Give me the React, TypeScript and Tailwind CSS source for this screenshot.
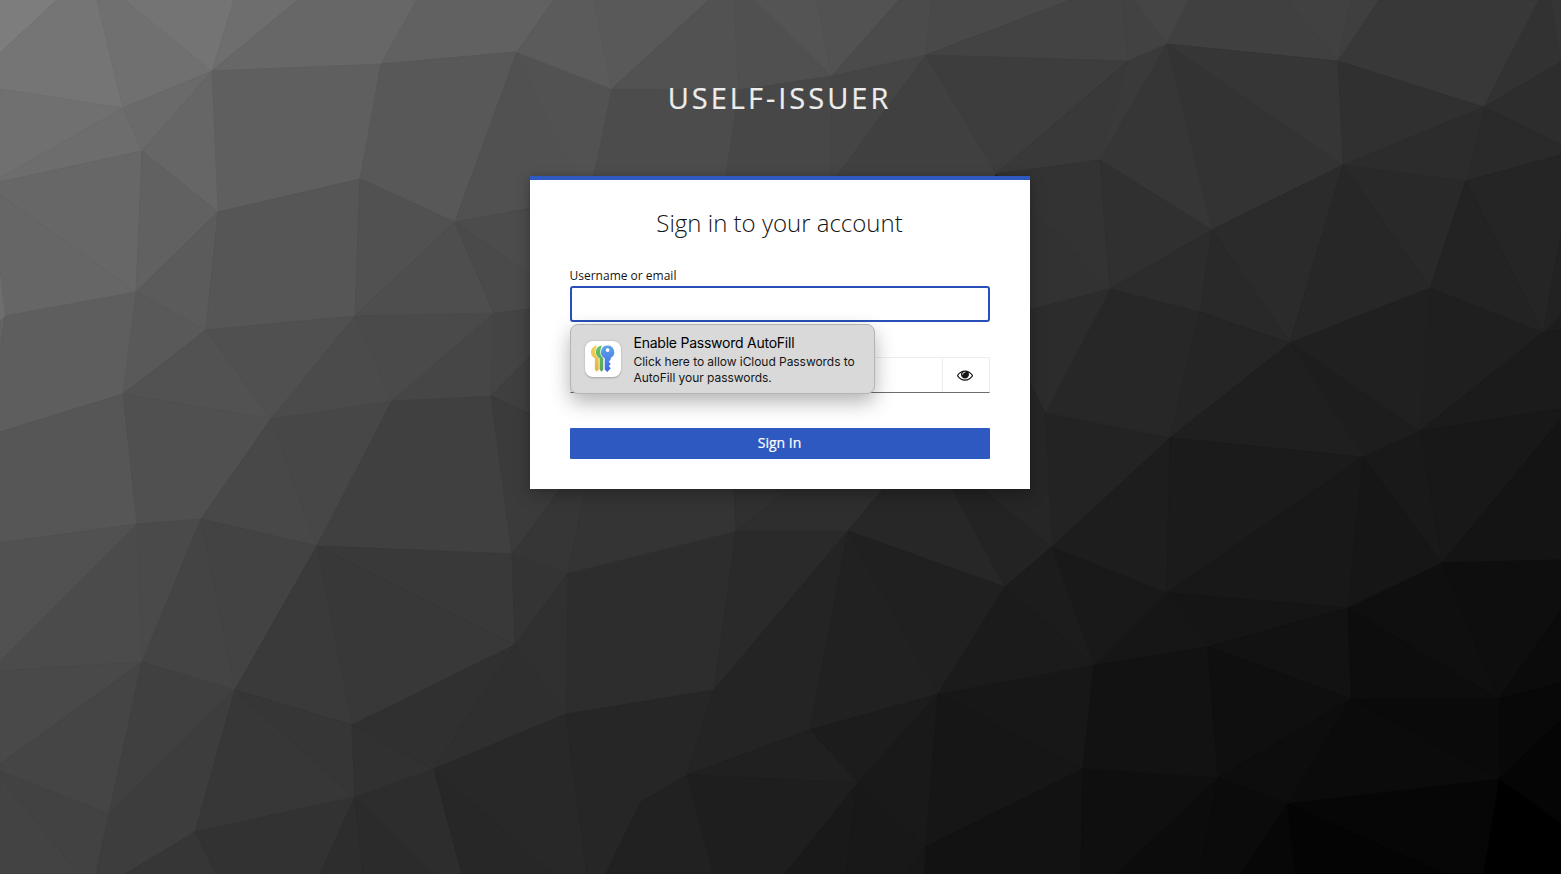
import React from "react";

/* Low-poly backdrop: "fill points" for every facet. */
const FACETS: string[] = [
  "7d7d7d 0,0 57,0 0,53",
  "757575 57,0 97,0 123,108 0,89 0,53",
  "707070 97,0 125,0 212,71 123,108",
  "747474 125,0 234,0 212,71",
  "6e6e6e 234,0 298,0 212,71",
  "676767 298,0 417,0 381,64 212,71",
  "616161 417,0 554,0 517,52 381,64",
  "707070 0,89 123,108 0,178",
  "6d6d6d 0,178 123,108 142,151 0,182",
  "6a6a6a 123,108 212,71 142,151",
  "666666 142,151 212,71 218,212",
  "5f5f5f 212,71 381,64 360,179 218,212",
  "585858 381,64 517,52 455,222 360,179",
  "515151 517,52 576,176 576,200 455,222",
  "525252 517,52 612,89 593,180 576,180",
  "676767 0,182 142,151 136,292 0,195",
  "666666 0,195 136,292 5,316 0,276",
  "6e6e6e 0,276 5,316 0,321",
  "616161 142,151 218,212 136,292",
  "5b5b5b 136,292 218,212 206,330",
  "565656 218,212 360,179 355,316 206,330",
  "515151 360,179 455,222 355,316",
  "4e4e4e 355,316 455,222 494,313",
  "4c4c4c 455,222 540,207 540,282",
  "4a4a4a 455,222 540,282 540,308 494,313",
  "636363 0,321 5,316 0,350",
  "5e5e5e 5,316 136,292 123,394 0,432 0,350",
  "595959 136,292 206,330 123,394",
  "525252 123,394 206,330 271,419",
  "505050 206,330 355,316 271,419",
  "4b4b4b 355,316 392,401 271,419",
  "4a4a4a 355,316 494,313 392,401",
  "464646 494,313 491,396 392,401",
  "444444 494,313 540,308 540,346 491,396",
  "3f3f3f 491,396 540,346 540,419",
  "565656 0,432 123,394 137,524 0,543",
  "505050 123,394 271,419 201,519 137,524",
  "484848 271,419 317,546 201,519",
  "474747 271,419 392,401 317,546",
  "404040 392,401 491,396 512,554 317,546",
  "3b3b3b 491,396 540,419 565,483 512,554",
  "515151 0,543 137,524 0,661",
  "4b4b4b 0,661 137,524 142,662 0,671",
  "4a4a4a 137,524 201,519 142,662",
  "444444 201,519 235,690 142,662",
  "434343 201,519 317,546 235,690",
  "494949 0,671 142,662 0,764",
  "454545 0,764 142,662 109,814 0,771",
  "404040 142,662 235,690 109,814",
  "3d3d3d 235,690 195,832 109,814",
  "3a3a3a 317,546 352,725 235,690",
  "393939 317,546 512,554 515,645",
  "383838 317,546 515,645 352,725",
  "343434 512,554 568,573 515,645",
  "373737 235,690 355,797 195,832",
  "363636 235,690 352,725 355,797",
  "313131 352,725 434,769 355,797",
  "303030 352,725 515,645 434,769",
  "434343 0,777 79,874 0,874",
  "424242 0,771 109,814 96,874 79,874 0,777",
  "3d3d3d 109,814 195,832 125,874 96,874",
  "363636 195,832 216,874 125,874",
  "323232 195,832 355,797 320,874 216,874",
  "2d2d2d 355,797 363,874 320,874",
  "2b2b2b 355,797 434,874 363,874",
  "2d2d2d 355,797 434,769 462,874 434,874",
  "303030 515,645 568,573 566,714",
  "2f2f2f 515,645 566,714 434,769",
  "272727 434,769 553,874 462,874",
  "282828 434,769 566,714 587,874 553,874",
  "2d2d2d 568,573 736,531 714,690 566,714",
  "2a2a2a 736,531 848,531 714,690",
  "262626 566,714 714,690 687,775 641,802 606,874 587,874",
  "363636 512,554 565,483 587,483 568,573",
  "343434 568,573 587,483 734,483 736,531",
  "303030 736,531 734,483 797,483",
  "2e2e2e 736,531 797,483 888,483 848,531",
  "272727 848,531 888,483 949,483 1005,587",
  "232323 1005,587 949,483 976,483 1052,547",
  "242424 714,690 848,531 810,730 687,775",
  "212121 848,531 938,694 810,730",
  "202020 848,531 1005,587 938,694",
  "1c1c1c 810,730 938,694 858,783",
  "202020 687,775 810,730 858,783",
  "1e1e1e 687,775 858,783 785,874 713,874",
  "212121 641,802 687,775 713,874 606,874",
  "191919 858,783 938,694 926,847",
  "191919 858,783 846,874 785,874",
  "181818 858,783 926,847 906,874 846,874",
  "171717 926,847 925,874 906,874",
  "171717 938,694 1094,665 1083,769",
  "161616 938,694 1083,769 926,847",
  "121212 926,847 1083,769 1081,874 925,874",
  "1b1b1b 1005,587 1094,665 938,694",
  "1c1c1c 1005,587 1052,547 1094,665",
  "5b5b5b 554,0 594,0 612,89 517,52",
  "595959 594,0 709,0 612,89",
  "525252 612,89 709,0 734,0 739,90",
  "505050 734,0 754,0 832,76 739,90",
  "545454 754,0 817,0 832,76",
  "525252 817,0 899,0 832,76",
  "4b4b4b 832,76 899,0 932,0 926,55",
  "494949 926,55 932,0 1071,0",
  "434343 926,55 1071,0 1123,0 1128,61",
  "4c4c4c 612,89 739,90 725,180 593,180",
  "474747 739,90 832,76 830,180 725,180",
  "454545 832,76 926,55 834,180 830,180",
  "404040 926,55 996,174 990,180 834,180",
  "3d3d3d 926,55 1128,61 996,174",
  "424242 1123,0 1134,0 1167,44 1128,61",
  "454545 1134,0 1189,0 1167,44",
  "404040 1189,0 1287,0 1338,61 1167,44",
  "414141 1287,0 1351,0 1338,61",
  "3f3f3f 1351,0 1379,0 1338,61",
  "383838 1338,61 1379,0 1539,0 1484,107",
  "323232 1484,107 1539,0 1551,0 1561,62",
  "353535 1551,0 1561,0 1561,62",
  "393939 996,174 1128,61 1100,160",
  "3a3a3a 1128,61 1167,44 1100,160",
  "333333 996,174 1100,160 1110,289",
  "363636 1100,160 1167,44 1212,230",
  "333333 1167,44 1343,165 1212,230",
  "363636 1167,44 1338,61 1343,165",
  "303030 1338,61 1484,107 1343,165",
  "303030 1100,160 1212,230 1110,289",
  "2d2d2d 1484,107 1561,62 1561,145",
  "2a2a2a 1484,107 1561,145 1561,155 1466,181",
  "2c2c2c 1343,165 1484,107 1466,181",
  "292929 1343,165 1466,181 1430,288",
  "2b2b2b 1212,230 1343,165 1290,343",
  "272727 1343,165 1430,288 1290,343",
  "2c2c2c 1212,230 1200,312 1110,289",
  "292929 1212,230 1290,343 1200,312",
  "272727 1110,289 1200,312 1170,438 1045,413",
  "252525 1200,312 1290,343 1170,438",
  "323232 1024,203 1110,289 1024,311",
  "2c2c2c 1024,311 1110,289 1045,413 1024,370",
  "252525 1466,181 1561,155 1561,235 1543,333",
  "232323 1466,181 1543,333 1430,288",
  "222222 1543,333 1561,235 1561,315",
  "202020 1290,343 1430,288 1420,431",
  "1f1f1f 1430,288 1543,333 1420,431",
  "1d1d1d 1290,343 1420,431 1363,457",
  "1f1f1f 1290,343 1363,457 1170,438",
  "1d1d1d 1543,333 1561,315 1561,330",
  "1b1b1b 1543,333 1561,330 1561,409 1420,431",
  "181818 1420,431 1561,409 1561,419 1442,563",
  "191919 1420,431 1442,563 1363,457",
  "141414 1442,563 1561,419 1561,560",
  "232323 1045,413 1170,438 1052,547",
  "262626 1024,370 1045,413 1052,547 976,483 1024,483",
  "1d1d1d 1170,438 1167,593 1052,547",
  "1b1b1b 1170,438 1363,457 1167,593",
  "181818 1363,457 1348,608 1167,593",
  "161616 1363,457 1442,563 1348,608",
  "191919 1052,547 1167,593 1094,665",
  "151515 1167,593 1348,608 1208,647",
  "161616 1167,593 1208,647 1094,665",
  "121212 1208,647 1348,608 1351,699",
  "0f0f0f 1348,608 1442,563 1499,699",
  "0d0d0d 1348,608 1499,699 1351,699",
  "0e0e0e 1442,563 1561,560 1561,610 1499,699",
  "0b0b0b 1499,699 1561,610 1561,683",
  "080808 1499,699 1561,683 1561,720 1499,779",
  "0a0a0a 1351,699 1499,699 1499,779",
  "0b0b0b 1351,699 1499,779 1287,804",
  "121212 1094,665 1208,647 1218,778 1083,769",
  "0f0f0f 1208,647 1351,699 1218,778",
  "0d0d0d 1351,699 1287,804 1218,778",
  "050505 1499,779 1561,720 1561,824",
  "000000 1499,779 1561,824 1561,874 1483,874",
  "060606 1287,804 1499,779 1483,874 1444,874",
  "040404 1287,804 1444,874 1295,874",
  "070707 1287,804 1295,874 1240,874",
  "0b0b0b 1218,778 1287,804 1240,874 1199,874",
  "0c0c0c 1218,778 1199,874 1115,874",
  "0f0f0f 1083,769 1218,778 1115,874 1081,874",
];

function Backdrop() {
  return (
    <svg className="absolute inset-0 h-full w-full" viewBox="0 0 1561 874" preserveAspectRatio="none" aria-hidden="true">
      {FACETS.map((facet, i) => {
        const color = "#" + facet.slice(0, 6);
        return <polygon key={i} points={facet.slice(7)} fill={color} stroke={color} strokeWidth={0.8} />;
      })}
    </svg>
  );
}

function EyeIcon() {
  return (
    <svg className="mr-[1.5px] h-4 w-4" viewBox="0 0 1792 1792" fill="#151515" aria-hidden="true">
      <path d="M1664 960q-152-236-381-353 61 104 61 225 0 185-131.5 316.5t-316.5 131.5-316.5-131.5-131.5-316.5q0-121 61-225-229 117-381 353 133 205 333.5 326.5t434.5 121.5 434.5-121.5 333.5-326.5zm-720-384q0-20-14-34t-34-14q-125 0-214.5 89.5t-89.5 214.5q0 20 14 34t34 14 34-14 14-34q0-86 61-147t147-61q20 0 34-14t14-34zm848 384q0 34-20 69-140 230-376.5 368.5t-499.5 138.5-499.5-139-376.5-368q-20-35-20-69t20-69q140-229 376.5-368t499.5-139 499.5 139 376.5 368q20 35 20 69z" />
    </svg>
  );
}

function PasswordsIcon() {
  return (
    <svg className="h-9 w-9" viewBox="0 0 36 36" aria-hidden="true">
      <defs>
        <linearGradient id="kb" x1="0" y1="0" x2="0" y2="1">
          <stop offset="0" stopColor="#5fa5e6" />
          <stop offset="1" stopColor="#3f63e8" />
        </linearGradient>
        <linearGradient id="kg" x1="0" y1="0" x2="0" y2="1">
          <stop offset="0" stopColor="#62c466" />
          <stop offset="1" stopColor="#57a556" />
        </linearGradient>
        <linearGradient id="ky" x1="0" y1="0" x2="0" y2="1">
          <stop offset="0" stopColor="#f0d25c" />
          <stop offset="1" stopColor="#e8b044" />
        </linearGradient>
      </defs>
      <path d="M12.2 4.6C8.4 5 6 7.7 6 11.2c0 2.7 1.5 4.9 3.9 6v11.3l1.9 2.2 1.9-2V17.2c-1.9-1.4-3.3-3.5-3.3-6 0-2.7.9-5 1.8-6.6z" fill="url(#ky)" />
      <path d="M17 4.6C13.3 5 10.9 7.7 10.9 11.2c0 2.7 1.5 4.9 3.7 6v11.3l1.9 2.2 1.8-2V17.2c-1.9-1.4-3-3.5-3-6 0-2.7.8-5 1.7-6.6z" fill="url(#kg)" />
      <path fillRule="evenodd" d="M22.6 4.5a6.7 6.7 0 0 0-2.9 12.7v11.4l2.5 2.4 3.6-3.7-2-2.2 2-2.2-2-2.2 1.9-2.2v-1.4A6.7 6.7 0 0 0 22.6 4.5zm0 2.7a1.9 1.9 0 1 1 0 3.8 1.9 1.9 0 0 1 0-3.8z" fill="url(#kb)" />
    </svg>
  );
}

function AutoFillPopup() {
  return (
    <div className="absolute left-[40px] top-[144px] flex h-[70px] w-[305px] items-center rounded-[8px] border border-[#b4b4b4] bg-[#d9d9d9] pl-[14px] font-[Inter,sans-serif] shadow-[0_8px_20px_rgba(0,0,0,0.3)]">
      <div className="h-9 w-9 shrink-0 rounded-[8px] bg-white shadow-[0_0.5px_2px_rgba(0,0,0,0.25)]">
        <PasswordsIcon />
      </div>
      <div className="ml-[12.5px] whitespace-nowrap text-black">
        <div className="text-[14px] leading-[20px] tracking-[-0.24px]">Enable Password AutoFill</div>
        <div className="-mb-px pt-px text-[12px] leading-[16px] tracking-[-0.05px] text-[#161616]">
          Click here to allow iCloud Passwords to
          <br />
          AutoFill your passwords.
        </div>
      </div>
    </div>
  );
}

function LoginCard() {
  return (
    <main className="relative h-[313px] w-[500px] border-t-4 border-[#2d59c1] bg-white px-10 shadow-[0_6px_16px_rgba(3,3,3,0.22),0_0_6px_rgba(3,3,3,0.12)]">
      <h1 className="pt-[24px] pr-px text-center text-[24px] leading-[38px] font-light text-[#151515]">Sign in to your account</h1>
      <label className="mt-[24px] -ml-[0.5px] block text-[12px] leading-[20px] text-[#151515]">Username or email</label>
      <div className="h-[36px] rounded-[3px] border-2 border-[#2950b8] bg-white" />
      <div className="mt-[35px] flex h-[36px] border border-[#ededed] border-b-[#6a6e73]">
        <div className="flex-1" />
        <button className="flex w-[47px] items-center justify-center border-l border-[#ededed]">
          <EyeIcon />
        </button>
      </div>
      <button className="mt-[35px] block h-[31px] w-full rounded-[1px] bg-[#2d59c1] pr-px pb-px text-center text-[14px] leading-[28px] text-white [-webkit-text-stroke:0.2px_white]">
        Sign In
      </button>
      <AutoFillPopup />
    </main>
  );
}

export default function App() {
  return (
    <div className="relative h-[874px] w-[1561px] overflow-hidden bg-[#222222] font-['Open_Sans',sans-serif]">
      <Backdrop />
      <div className="relative flex w-[1560px] flex-col items-center">
        <header className="flex h-[176px] items-start justify-center pt-[78px] pr-px text-[29px] leading-[40px] tracking-[3px] text-[#ededed] [-webkit-text-stroke:0.2px_#ededed]">
          USELF-ISSUER
        </header>
        <LoginCard />
      </div>
    </div>
  );
}
